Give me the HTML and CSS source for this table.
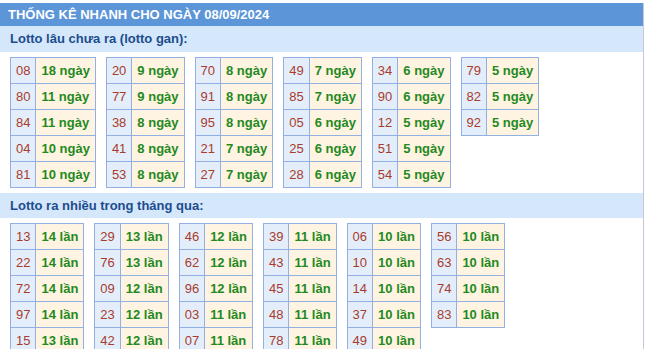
FILE: index.html
```html
<!DOCTYPE html>
<html lang="vi">
<head>
<meta charset="utf-8">
<title>Thống kê nhanh</title>
<link rel="stylesheet" href="styles.css">
</head>
<body>
<div class="box">
  <div class="title">THỐNG KÊ NHANH CHO NGÀY 08/09/2024</div>
  <div class="heading">Lotto lâu chưa ra (lotto gan):</div>
  <div class="tables">
    <table class="tbl">
      <tr><td class="num">08</td><td class="val">18 ngày</td></tr>
      <tr><td class="num">80</td><td class="val">11 ngày</td></tr>
      <tr><td class="num">84</td><td class="val">11 ngày</td></tr>
      <tr><td class="num">04</td><td class="val">10 ngày</td></tr>
      <tr><td class="num">81</td><td class="val">10 ngày</td></tr>
    </table>
    <table class="tbl">
      <tr><td class="num">20</td><td class="val">9 ngày</td></tr>
      <tr><td class="num">77</td><td class="val">9 ngày</td></tr>
      <tr><td class="num">38</td><td class="val">8 ngày</td></tr>
      <tr><td class="num">41</td><td class="val">8 ngày</td></tr>
      <tr><td class="num">53</td><td class="val">8 ngày</td></tr>
    </table>
    <table class="tbl">
      <tr><td class="num">70</td><td class="val">8 ngày</td></tr>
      <tr><td class="num">91</td><td class="val">8 ngày</td></tr>
      <tr><td class="num">95</td><td class="val">8 ngày</td></tr>
      <tr><td class="num">21</td><td class="val">7 ngày</td></tr>
      <tr><td class="num">27</td><td class="val">7 ngày</td></tr>
    </table>
    <table class="tbl">
      <tr><td class="num">49</td><td class="val">7 ngày</td></tr>
      <tr><td class="num">85</td><td class="val">7 ngày</td></tr>
      <tr><td class="num">05</td><td class="val">6 ngày</td></tr>
      <tr><td class="num">25</td><td class="val">6 ngày</td></tr>
      <tr><td class="num">28</td><td class="val">6 ngày</td></tr>
    </table>
    <table class="tbl">
      <tr><td class="num">34</td><td class="val">6 ngày</td></tr>
      <tr><td class="num">90</td><td class="val">6 ngày</td></tr>
      <tr><td class="num">12</td><td class="val">5 ngày</td></tr>
      <tr><td class="num">51</td><td class="val">5 ngày</td></tr>
      <tr><td class="num">54</td><td class="val">5 ngày</td></tr>
    </table>
    <table class="tbl">
      <tr><td class="num">79</td><td class="val">5 ngày</td></tr>
      <tr><td class="num">82</td><td class="val">5 ngày</td></tr>
      <tr><td class="num">92</td><td class="val">5 ngày</td></tr>
    </table>
  </div>
  <div class="heading heading-second">Lotto ra nhiều trong tháng qua:</div>
  <div class="tables">
    <table class="tbl">
      <tr><td class="num">13</td><td class="val">14 lần</td></tr>
      <tr><td class="num">22</td><td class="val">14 lần</td></tr>
      <tr><td class="num">72</td><td class="val">14 lần</td></tr>
      <tr><td class="num">97</td><td class="val">14 lần</td></tr>
      <tr><td class="num">15</td><td class="val">13 lần</td></tr>
    </table>
    <table class="tbl">
      <tr><td class="num">29</td><td class="val">13 lần</td></tr>
      <tr><td class="num">76</td><td class="val">13 lần</td></tr>
      <tr><td class="num">09</td><td class="val">12 lần</td></tr>
      <tr><td class="num">23</td><td class="val">12 lần</td></tr>
      <tr><td class="num">42</td><td class="val">12 lần</td></tr>
    </table>
    <table class="tbl">
      <tr><td class="num">46</td><td class="val">12 lần</td></tr>
      <tr><td class="num">62</td><td class="val">12 lần</td></tr>
      <tr><td class="num">96</td><td class="val">12 lần</td></tr>
      <tr><td class="num">03</td><td class="val">11 lần</td></tr>
      <tr><td class="num">07</td><td class="val">11 lần</td></tr>
    </table>
    <table class="tbl">
      <tr><td class="num">39</td><td class="val">11 lần</td></tr>
      <tr><td class="num">43</td><td class="val">11 lần</td></tr>
      <tr><td class="num">45</td><td class="val">11 lần</td></tr>
      <tr><td class="num">48</td><td class="val">11 lần</td></tr>
      <tr><td class="num">78</td><td class="val">11 lần</td></tr>
    </table>
    <table class="tbl">
      <tr><td class="num">06</td><td class="val">10 lần</td></tr>
      <tr><td class="num">10</td><td class="val">10 lần</td></tr>
      <tr><td class="num">14</td><td class="val">10 lần</td></tr>
      <tr><td class="num">37</td><td class="val">10 lần</td></tr>
      <tr><td class="num">49</td><td class="val">10 lần</td></tr>
    </table>
    <table class="tbl">
      <tr><td class="num">56</td><td class="val">10 lần</td></tr>
      <tr><td class="num">63</td><td class="val">10 lần</td></tr>
      <tr><td class="num">74</td><td class="val">10 lần</td></tr>
      <tr><td class="num">83</td><td class="val">10 lần</td></tr>
    </table>
  </div>
</div>
</body>
</html>
```
FILE: styles.css
```css
html, body {
  margin: 0;
  padding: 0;
  background: #ffffff;
}
body {
  font-family: "Liberation Sans", Arial, sans-serif;
  font-size: 13px;
}
.box {
  margin-top: 3px;
  width: 643px;
  border-right: 1px solid #c6c6d8;
  min-height: 346px;
}
.title {
  height: 23px;
  line-height: 23px;
  background: #5c95d8;
  color: #ffffff;
  font-weight: bold;
  font-size: 13px;
  padding-left: 8px;
}
.heading {
  height: 26px;
  line-height: 26px;
  background: #d5e7fa;
  color: #1c4d8e;
  font-weight: bold;
  font-size: 13px;
  padding-left: 10px;
}
.heading-second {
  height: 25px;
  line-height: 25px;
}
.tables {
  display: flex;
  align-items: flex-start;
  gap: 10px;
  padding: 5px 10px 5px 10px;
}
.tbl {
  border-collapse: collapse;
}
.tbl td {
  border: 1px solid #92b0e2;
  padding: 5px 5px;
  line-height: 15px;
  font-size: 13px;
  white-space: nowrap;
}
.num {
  background: #e4eefb;
  color: #a83c2c;
  text-align: center;
}
.val {
  background: #fff3e1;
  color: #1f8a1f;
  font-weight: bold;
}
```
